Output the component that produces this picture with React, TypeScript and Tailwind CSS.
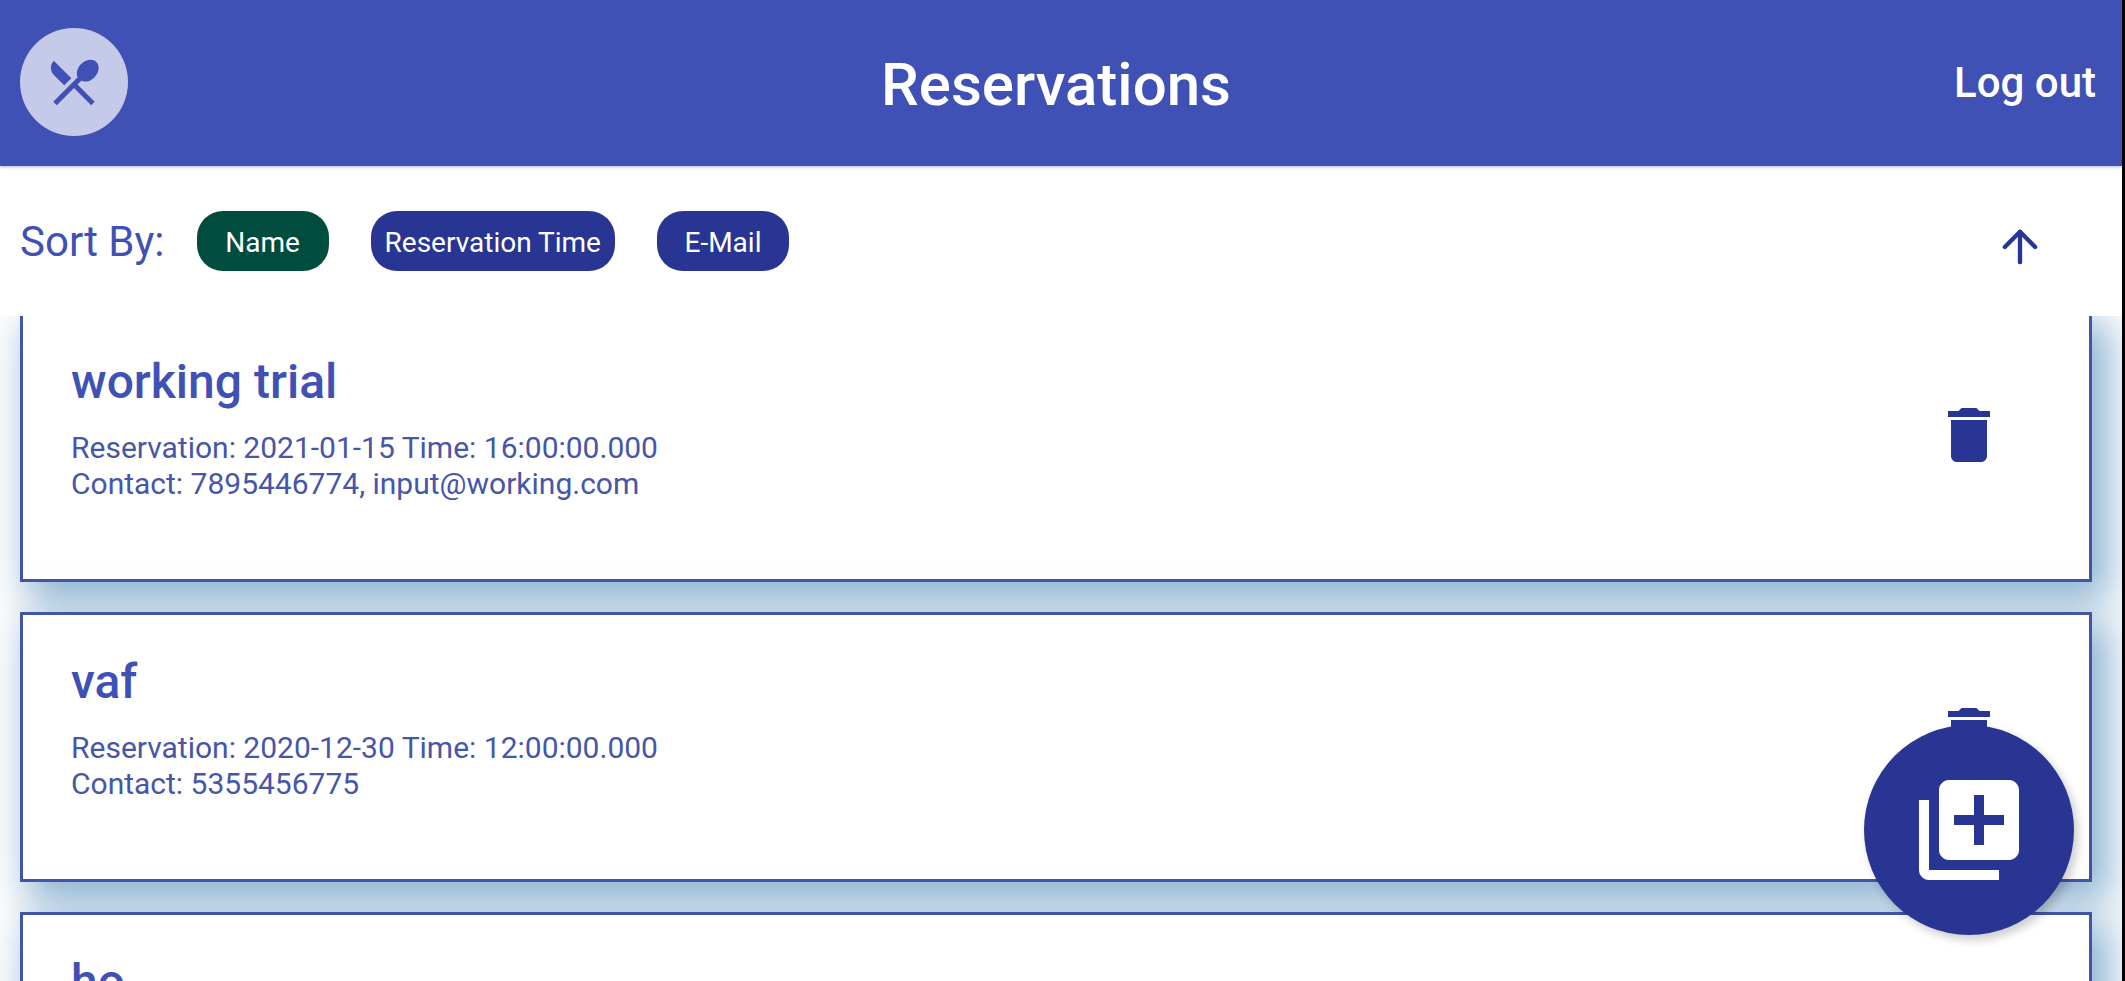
import { ArrowUp } from "lucide-react";
import { MdDelete, MdLibraryAdd, MdRestaurantMenu } from "react-icons/md";

type Reservation = { name: string; lines: string[] };

const reservations: Reservation[] = [
  {
    name: "working trial",
    lines: ["Reservation: 2021-01-15 Time: 16:00:00.000", "Contact: 7895446774, input@working.com"],
  },
  { name: "vaf", lines: ["Reservation: 2020-12-30 Time: 12:00:00.000", "Contact: 5355456775"] },
  { name: "ho", lines: [] },
];

const sortOptions = ["Name", "Reservation Time", "E-Mail"];

function ReservationCard({ name, lines }: Reservation) {
  return (
    <li className="flex h-[270px] shrink-0 items-center justify-between border-3 border-[#4455a6] bg-white pr-[84px] pl-12 text-[#3f51b5] shadow-[12px_14px_38px_5px_rgba(70,130,180,0.62)]">
      <div className="self-start pt-[39px]">
        <h2 className="text-[48px] leading-[56px] font-medium">{name}</h2>
        <div className="mt-5 text-[30px] leading-9 text-[#4656a8]">
          {lines.map((line) => (
            <p key={line}>{line}</p>
          ))}
        </div>
      </div>
      <button type="button" aria-label={`Delete ${name}`} className="mb-6 text-[#283593]">
        <MdDelete size={72} />
      </button>
    </li>
  );
}

export default function App() {
  return (
    <div className="flex h-screen flex-col overflow-hidden border-r-3 border-black bg-white font-[Roboto,sans-serif]">
      <header className="relative z-20 grid h-[166px] shrink-0 grid-cols-[1fr_auto_1fr] items-center bg-[#3f51b5] pr-[26px] pb-[2px] pl-5 text-white shadow-[0_1px_3px_rgba(63,81,181,0.4)]">
        <div className="flex size-[108px] items-center justify-center rounded-full bg-[#c5cae9] text-[#3f51b5]">
          <MdRestaurantMenu size={60} />
        </div>
        <h1 className="pt-1.5 pr-1 text-[60px] leading-[72px] font-medium">Reservations</h1>
        <button type="button" className="justify-self-end pt-[2px] text-[42px] leading-[48px] font-medium">
          Log out
        </button>
      </header>

      <div className="relative z-10 flex h-[150px] shrink-0 items-center bg-white pr-[76px] pl-5">
        <span className="mr-8 pt-[2px] text-[42px] leading-[48px] text-[#3f51b5]">Sort By:</span>
        <div className="flex gap-[42px]">
          {sortOptions.map((option, index) => (
            <button
              key={option}
              type="button"
              aria-pressed={index === 0}
              className={`h-[60px] min-w-[132px] rounded-[26px] px-3.5 pt-1 text-[28px] text-white ${index === 0 ? "bg-[#004d40]" : "bg-[#283593]"}`}
            >
              {option}
            </button>
          ))}
        </div>
        <button type="button" aria-label="Sort ascending" className="mt-3 ml-auto text-[#283593]">
          <ArrowUp size={52} />
        </button>
      </div>

      <main className="-mt-1 min-h-0 flex-1">
        <ul className="flex flex-col gap-[30px] pr-[30px] pl-5">
          {reservations.map((reservation) => (
            <ReservationCard key={reservation.name} {...reservation} />
          ))}
        </ul>
      </main>

      <button
        type="button"
        aria-label="Add reservation"
        className="fixed right-[51px] bottom-[46px] z-30 flex size-[210px] items-center justify-center rounded-full bg-[#283593] text-white shadow-[4px_5px_10px_rgba(0,0,0,0.2)]"
      >
        <MdLibraryAdd size={120} />
      </button>
    </div>
  );
}
